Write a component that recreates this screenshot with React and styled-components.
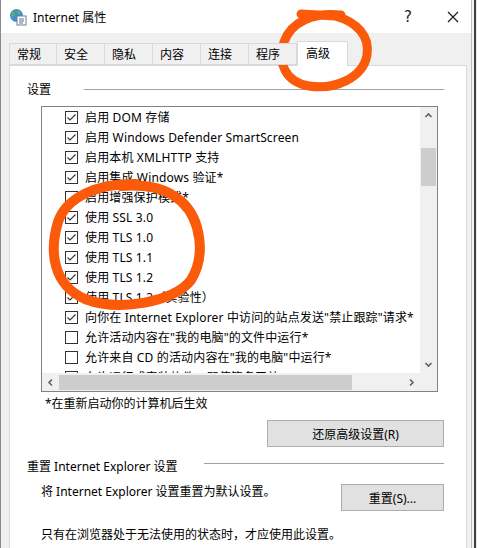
import React from 'react'
import styled, { createGlobalStyle } from 'styled-components'

const Global = createGlobalStyle`
    html, body {
        margin: 0;
        padding: 0;
        background: #f0f0f0;
    }
    * {
        box-sizing: border-box;
    }
    body {
        font-family: "Noto Sans", "Noto Sans CJK SC", sans-serif;
        font-size: 12px;
        color: #000;
    }
`

const Screen = styled.div`
    position: relative;
    width: 477px;
    height: 548px;
    overflow: hidden;
    display: flex;
    border-left: 1px solid #8a8a8a;
`
const Win = styled.div`
    width: 471px;
    flex: none;
    display: flex;
    flex-direction: column;
    background: #f0f0f0;
    border-right: 1px solid #bdbdbd;
`
const Edge = styled.div`
    flex: 1;
    background: linear-gradient(90deg, #f3f3f3 0 2px, #3b3f46 2px 4px, #e9e9e9 4px);
`
const TitleBar = styled.div`
    height: 33px;
    background: #fff;
    display: flex;
    align-items: center;
    padding-left: 8px;
`
const TitleText = styled.span`
    margin-left: 6px;
    font-size: 12px;
    flex: 1;
`
const Caption = styled.div`
    flex: none;
    width: ${p => p.w}px;
    height: 20px;
    margin-left: ${p => p.ml || 0}px;
    display: flex;
    align-items: center;
    justify-content: center;
    font-size: 15px;
    font-family: "DejaVu Sans", sans-serif;
    color: #222;
`
const TabRow = styled.div`
    display: flex;
    align-items: flex-end;
    margin-top: 7px;
    padding-left: 8px;
    height: 25px;
    position: relative;
    z-index: 1;
`
const Tab = styled.div`
    width: ${p => p.w}px;
    height: ${p => (p.active ? 25 : 22)}px;
    margin-bottom: ${p => (p.active ? -1 : 0)}px;
    background: ${p => (p.active ? '#fff' : '#f0f0f0')};
    border: 1px solid #d9d9d9;
    border-bottom: ${p => (p.active ? 'none' : '1px solid #d9d9d9')};
    border-left: ${p => (p.first || p.active ? '1px solid #d9d9d9' : 'none')};
    padding-left: ${p => (p.active ? 8 : 7)}px;
    display: flex;
    align-items: center;
    padding-bottom: ${p => (p.active ? 3 : 0)}px;
`
const Panel = styled.div`
    flex: 1;
    margin-left: 8px;
    margin-right: 4px;
    background: #fff;
    border: 1px solid #d9d9d9;
    border-bottom: none;
    padding: 14px 22px 0 17px;
    display: flex;
    flex-direction: column;
`
const GroupHead = styled.div`
    display: flex;
    align-items: center;
    gap: 8px;
    height: 18px;
    margin-top: ${p => p.mt || 0}px;
`
const Rule = styled.div`
    flex: 1;
    height: 1px;
    background: #a0a0a0;
    margin-left: ${p => p.ml || 0}px;
    margin-top: ${p => p.mt || 0}px;
`
const ListBox = styled.div`
    margin: 8px 0 0 14px;
    width: 397px;
    height: 286px;
    border: 1px solid #828282;
    display: grid;
    grid-template-columns: 1fr 17px;
    grid-template-rows: 1fr 18px;
`
const Rows = styled.div`
    overflow: hidden;
    padding-left: 23px;
`
const Row = styled.div`
    height: 20px;
    display: flex;
    align-items: center;
    gap: 7px;
    white-space: nowrap;
    letter-spacing: 0.15px;
`
const Box = styled.span`
    width: 13px;
    height: 13px;
    border: 1px solid #333;
    flex: none;
    display: flex;
`
const VScroll = styled.div`
    background: #f0f0f0;
    display: flex;
    flex-direction: column;
    align-items: center;
`
const HScroll = styled.div`
    background: #f0f0f0;
    display: flex;
    align-items: center;
`
const Corner = styled.div`
    background: #f0f0f0;
`
const Arrow = styled.span`
    width: 17px;
    height: 17px;
    flex: none;
    display: flex;
    align-items: center;
    justify-content: center;
`
const VThumb = styled.div`
    width: 15px;
    height: 38px;
    margin-top: 24px;
    background: #cdcdcd;
`
const HThumb = styled.div`
    width: 293px;
    height: 15px;
    background: #cdcdcd;
`
const Spacer = styled.div`
    flex: 1;
`
const Note = styled.div`
    margin: ${p => p.m};
    height: 16px;
    line-height: 16px;
    white-space: nowrap;
`
const ButtonRow = styled.div`
    display: flex;
    align-items: flex-start;
    justify-content: space-between;
    margin-top: ${p => p.mt}px;
`
const Button = styled.div`
    width: ${p => p.w}px;
    height: 27px;
    background: #e1e1e1;
    border: 1px solid #adadad;
    display: flex;
    align-items: center;
    justify-content: center;
    margin-left: auto;
`
const Overlay = styled.svg`
    position: absolute;
    left: 0;
    top: 0;
    pointer-events: none;
`

const items = [
    ['启用 DOM 存储', true],
    ['启用 Windows Defender SmartScreen', true],
    ['启用本机 XMLHTTP 支持', true],
    ['启用集成 Windows 验证*', true],
    ['启用增强保护模式*', false],
    ['使用 SSL 3.0', true],
    ['使用 TLS 1.0', true],
    ['使用 TLS 1.1', true],
    ['使用 TLS 1.2', true],
    ['使用 TLS 1.3（实验性）', true],
    ['向你在 Internet Explorer 中访问的站点发送"禁止跟踪"请求*', true],
    ['允许活动内容在"我的电脑"的文件中运行*', false],
    ['允许来自 CD 的活动内容在"我的电脑"中运行*', false],
    ['允许运行或安装软件，即使签名无效', false],
]

const tabs = [['常规', 48], ['安全', 48], ['隐私', 48], ['内容', 48], ['连接', 48], ['程序', 48]]

function Check({ on }) {
    return (
        <Box>
            {on && (
                <svg width="11" height="11" viewBox="0 0 11 11">
                    <path d="M1.5 5.5 L4 8 L9.5 2.5" fill="none" stroke="#333" strokeWidth="1.1" />
                </svg>
            )}
        </Box>
    )
}

function Chevron({ dir }) {
    const d = {
        up: 'M1.5 6 L4.5 3 L7.5 6',
        down: 'M1.5 3 L4.5 6 L7.5 3',
        left: 'M6 1.5 L3 4.5 L6 7.5',
        right: 'M3 1.5 L6 4.5 L3 7.5',
    }[dir]
    return (
        <Arrow>
            <svg width="9" height="9" viewBox="0 0 9 9">
                <path d={d} fill="none" stroke="#606060" strokeWidth="1.6" />
            </svg>
        </Arrow>
    )
}

function IeIcon() {
    return (
        <svg width="18" height="18" viewBox="0 0 18 18">
            <circle cx="7.5" cy="7.5" r="6.5" fill="#3f8fd2" />
            <path d="M3 4 C5 3 7 5 6 7 C5 9 3 8 2 9 Z" fill="#5fb35a" />
            <path d="M8 2 C10 3 12 4 11 6 C10 7 9 6 8 5 Z" fill="#5fb35a" />
            <rect x="8" y="8" width="9" height="9" fill="#fff" stroke="#6b7d99" />
            <path d="M10 11 H15 M10 13 H15 M10 15 H14" stroke="#5a6f90" strokeWidth="1" />
        </svg>
    )
}

function CloseX() {
    return (
        <svg width="12" height="12" viewBox="0 0 12 12">
            <path d="M1 1 L11 11 M11 1 L1 11" stroke="#1a1a1a" strokeWidth="1.2" fill="none" />
        </svg>
    )
}

export default function App() {
    return (
        <>
            <Global />
            <Screen>
                <Win>
                    <TitleBar>
                        <IeIcon />
                        <TitleText>Internet 属性</TitleText>
                        <Caption w={20}>?</Caption>
                        <Caption w={36} ml={17}>
                            <CloseX />
                        </Caption>
                    </TitleBar>
                    <TabRow>
                        {tabs.map(([t, w], i) => (
                            <Tab key={t} w={w} first={i === 0}>{t}</Tab>
                        ))}
                        <Tab w={51} active>高级</Tab>
                    </TabRow>
                    <Panel>
                        <GroupHead>
                            <span>设置</span>
                            <Rule ml={25} />
                        </GroupHead>
                        <ListBox>
                            <Rows>
                                {items.map(([t, on]) => (
                                    <Row key={t}>
                                        <Check on={on} />
                                        <span>{t}</span>
                                    </Row>
                                ))}
                            </Rows>
                            <VScroll>
                                <Chevron dir="up" />
                                <VThumb />
                                <Spacer />
                                <Chevron dir="down" />
                            </VScroll>
                            <HScroll>
                                <Chevron dir="left" />
                                <HThumb />
                                <Spacer />
                                <Chevron dir="right" />
                            </HScroll>
                            <Corner />
                        </ListBox>
                        <Note m="4px 0 0 18px">*在重新启动你的计算机后生效</Note>
                        <ButtonRow mt={8}>
                            <Button w={177}>还原高级设置(R)</Button>
                        </ButtonRow>
                        <GroupHead mt={10}>
                            <span>重置 Internet Explorer 设置</span>
                            <Rule ml={18} mt={-5} />
                        </GroupHead>
                        <ButtonRow mt={9}>
                            <Note m="0 0 0 14px">将 Internet Explorer 设置重置为默认设置。</Note>
                            <Button w={103}>重置(S)...</Button>
                        </ButtonRow>
                        <Note m="16px 0 0 14px">只有在浏览器处于无法使用的状态时，才应使用此设置。</Note>
                    </Panel>
                </Win>
                <Edge />
                <Overlay width="477" height="548" viewBox="0 0 477 548">
                    <path
                        d="M340 15 C312 12 290 22 283 42 C276 62 284 82 308 86 C334 90 362 78 366 55 C369 36 356 22 334 16 L300 14"
                        fill="none" stroke="#fa5a0a" strokeWidth="9" strokeLinecap="round" strokeLinejoin="round"
                    />
                    <path
                        d="M135 184 C95 183 65 198 57 222 C48 252 52 285 84 299 C118 312 174 302 190 280 C205 256 200 220 181 202 C166 189 150 184 120 186"
                        fill="none" stroke="#fa5a0a" strokeWidth="10" strokeLinecap="round" strokeLinejoin="round"
                    />
                </Overlay>
            </Screen>
        </>
    )
}
